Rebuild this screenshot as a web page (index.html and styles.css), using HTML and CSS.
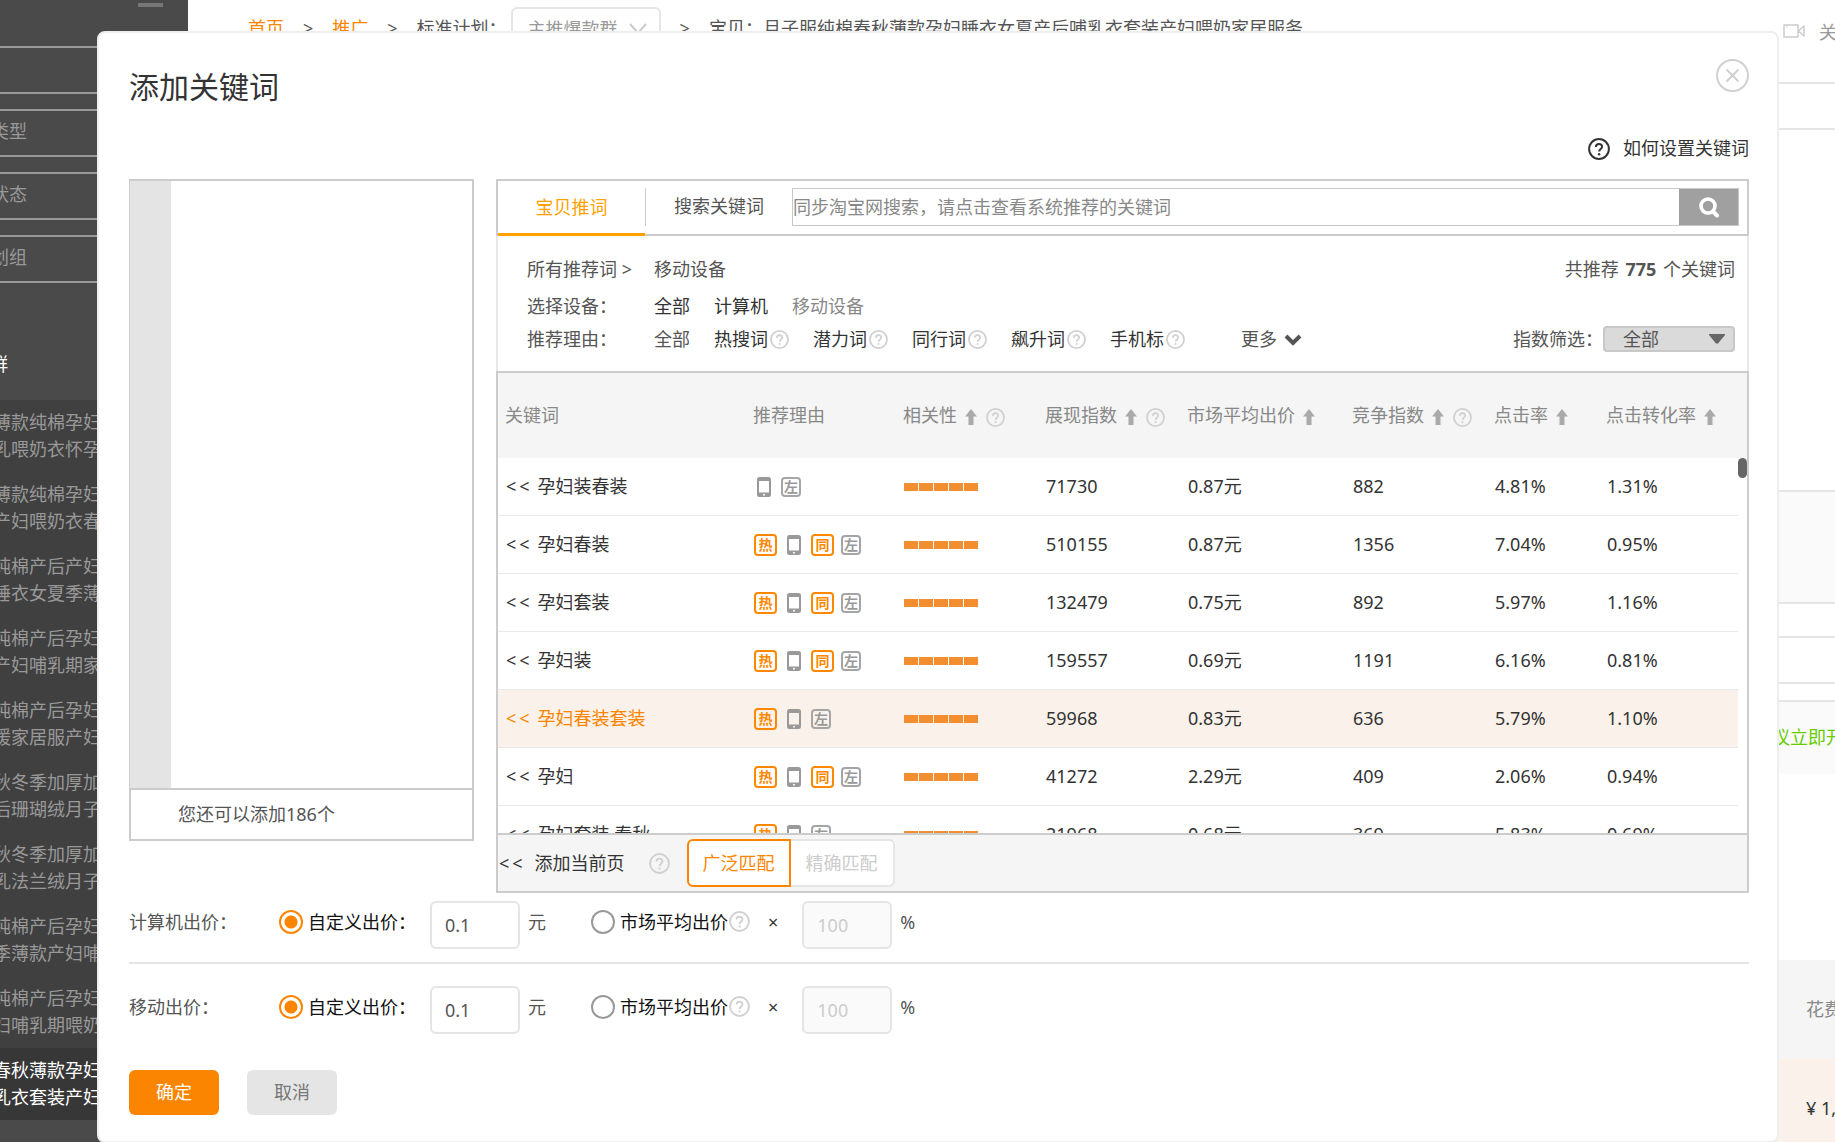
FILE: index.html
```html
<!DOCTYPE html>
<html lang="zh-CN">
<head>
<meta charset="utf-8">
<title>添加关键词</title>
<link rel="stylesheet" href="styles.css">
</head>
<body>
<svg class="sprite" aria-hidden="true">
  <symbol id="help" viewBox="0 0 20 20"><circle cx="10" cy="10" r="9" fill="none" stroke="currentColor" stroke-width="1.800"/><path d="M7.2 8.2c0-3.8 5.6-3.6 5.6-.3 0 2.1-2.6 2.2-2.6 4.4" fill="none" stroke="currentColor" stroke-width="1.800"/><circle cx="10.1" cy="14.8" r="1.1" fill="currentColor"/></symbol>
  <symbol id="up" viewBox="0 0 12 16"><path d="M6 0l6 7.500H8.500V16h-5V7.500H0z" fill="currentColor"/></symbol>
  <symbol id="phone" viewBox="0 0 14 20"><path fill-rule="evenodd" d="M2.500 0h9A2.500 2.500 0 0 1 14 2.500v15a2.500 2.500 0 0 1-2.500 2.500h-9A2.500 2.500 0 0 1 0 17.500v-15A2.500 2.500 0 0 1 2.500 0zM2 4v11.500h10V4zM7 16.700a1 1 0 1 0 0 2 1 1 0 0 0 0-2z" fill="currentColor"/></symbol>
</svg>

<div class="app">
  <aside class="sidebar">
    <div class="collapse"></div>
    <div class="side-box"></div>
    <div class="side-box">类型</div>
    <div class="side-box">状态</div>
    <div class="side-box">划组</div>
    <div class="side-group">群</div>
    <ul class="side-list">
      <li>薄款纯棉孕妇<br>乳喂奶衣怀孕</li>
      <li>薄款纯棉孕妇<br>产妇喂奶衣春</li>
      <li>纯棉产后产妇<br>睡衣女夏季薄</li>
      <li>纯棉产后孕妇<br>产妇哺乳期家</li>
      <li>纯棉产后孕妇<br>暖家居服产妇</li>
      <li>秋冬季加厚加<br>后珊瑚绒月子</li>
      <li>秋冬季加厚加<br>乳法兰绒月子</li>
      <li>纯棉产后孕妇<br>季薄款产妇哺</li>
      <li>纯棉产后孕妇<br>妇哺乳期喂奶</li>
      <li class="current">春秋薄款孕妇<br>乳衣套装产妇</li>
    </ul>
  </aside>
  <main class="page">
    <div class="topbar">
      <nav class="crumbs">
        <a href="#">首页</a><span>&gt;</span><a href="#">推广</a><span>&gt;</span><span>标准计划：</span>
        <button class="plan" type="button">主推爆款群<svg width="18" height="12" viewBox="0 0 18 12"><path d="M1 1l8 9 8-9" fill="none" stroke="#ccc" stroke-width="2"/></svg></button>
        <span>&gt;</span><span class="item-name">宝贝：月子服纯棉春秋薄款孕妇睡衣女夏产后哺乳衣套装产妇喂奶家居服务</span>
      </nav>
      <div class="video"><svg width="22" height="14" viewBox="0 0 22 14"><path d="M1 1h14v12H1zM15.500 7l5.500-5v10z" fill="none" stroke="#ccc" stroke-width="1.500" stroke-linejoin="round"/><path d="M3 3h1.500" stroke="#ccc"/></svg><span>关</span></div>
    </div>
    <div class="strip s1"></div>
    <div class="strip s2"></div>
    <div class="strip s3"></div>
    <div class="strip s4"></div>
    <div class="strip s5"></div>
    <div class="strip s6"></div>
    <div class="strip s7">议立即开</div>
    <div class="strip s8"></div>
    <div class="strip s9">花费</div>
    <div class="strip s10">¥ 1,</div>
  </main>
</div>

<section class="modal" role="dialog" aria-labelledby="dlg-title">
  <header class="modal-head">
    <h1 id="dlg-title">添加关键词</h1>
    <button class="close" type="button" aria-label="关闭"><svg width="33" height="33" viewBox="0 0 33 33" fill="none" stroke="#d0d0d0" stroke-width="2"><circle cx="16.500" cy="16.500" r="15.500"/><path d="M10.500 10.500l12 12m0-12l-12 12"/></svg></button>
  </header>
  <a class="how" href="#"><svg width="22" height="22"><use href="#help"/></svg>如何设置关键词</a>

  <div class="columns">
    <div class="picked">
      <textarea class="editor" aria-label="已选关键词"></textarea>
      <div class="remain">您还可以添加186个</div>
    </div>

    <div class="finder">
      <div class="tabs">
        <button class="tab" type="button">宝贝推词</button>
        <div class="search">
          <label for="kw">搜索关键词</label>
          <input id="kw" type="text" placeholder="同步淘宝网搜索，请点击查看系统推荐的关键词">
          <button type="button" aria-label="搜索"><svg width="22" height="22" viewBox="0 0 22 22" fill="none" stroke="#fff" stroke-linecap="round"><circle cx="10" cy="10" r="7" stroke-width="3.600"/><path d="M15 15.500l4 4" stroke-width="4"/></svg></button>
        </div>
      </div>

      <div class="filters">
        <div class="frow">
          <span class="flabel">所有推荐词 &gt;</span><span>移动设备</span>
          <span class="total">共推荐 <b>775</b> 个关键词</span>
        </div>
        <div class="frow device">
          <span class="flabel">选择设备：</span><a href="#">全部</a><a href="#">计算机</a><span class="off">移动设备</span>
        </div>
        <div class="frow reason">
          <span class="flabel">推荐理由：</span><span>全部</span>
          <a href="#">热搜词<svg class="q"><use href="#help"/></svg></a>
          <a href="#">潜力词<svg class="q"><use href="#help"/></svg></a>
          <a href="#">同行词<svg class="q"><use href="#help"/></svg></a>
          <a href="#">飙升词<svg class="q"><use href="#help"/></svg></a>
          <a href="#">手机标<svg class="q"><use href="#help"/></svg></a>
          <button class="more" type="button">更多<svg width="18" height="12" viewBox="0 0 18 12"><path d="M2 2l7 7 7-7" fill="none" stroke="#555" stroke-width="4"/></svg></button>
          <label class="index-label" for="idx">指数筛选：</label>
          <span class="index"><select id="idx"><option>全部</option></select><svg width="16" height="10" viewBox="0 0 16 10"><path d="M0 0h16v1L9 9.500H7L0 1z" fill="#666"/></svg></span>
        </div>
      </div>

      <div class="results">
        <table>
          <colgroup><col><col class="c-reason"><col class="c-rel"><col class="c-show"><col class="c-price"><col class="c-comp"><col class="c-ctr"><col class="c-cvr"></colgroup>
          <thead>
            <tr>
              <th>关键词</th><th>推荐理由</th>
              <th>相关性<svg class="up"><use href="#up"/></svg><svg class="q"><use href="#help"/></svg></th>
              <th>展现指数<svg class="up"><use href="#up"/></svg><svg class="q"><use href="#help"/></svg></th>
              <th>市场平均出价<svg class="up"><use href="#up"/></svg></th>
              <th>竞争指数<svg class="up"><use href="#up"/></svg><svg class="q"><use href="#help"/></svg></th>
              <th>点击率<svg class="up"><use href="#up"/></svg></th>
              <th>点击转化率<svg class="up"><use href="#up"/></svg></th>
            </tr>
          </thead>
          <tbody>
            <tr><td><a href="#"><i>&lt;</i><i>&lt;</i>孕妇装春装</a></td><td><div class="tags"><svg class="ph"><use href="#phone"/></svg><span class="tag">左</span></div></td><td><div class="bars"><i></i><i></i><i></i><i></i><i></i></div></td><td>71730</td><td>0.87元</td><td>882</td><td>4.81%</td><td>1.31%</td></tr>
            <tr><td><a href="#"><i>&lt;</i><i>&lt;</i>孕妇春装</a></td><td><div class="tags"><span class="tag hot">热</span><svg class="ph"><use href="#phone"/></svg><span class="tag hot">同</span><span class="tag">左</span></div></td><td><div class="bars"><i></i><i></i><i></i><i></i><i></i></div></td><td>510155</td><td>0.87元</td><td>1356</td><td>7.04%</td><td>0.95%</td></tr>
            <tr><td><a href="#"><i>&lt;</i><i>&lt;</i>孕妇套装</a></td><td><div class="tags"><span class="tag hot">热</span><svg class="ph"><use href="#phone"/></svg><span class="tag hot">同</span><span class="tag">左</span></div></td><td><div class="bars"><i></i><i></i><i></i><i></i><i></i></div></td><td>132479</td><td>0.75元</td><td>892</td><td>5.97%</td><td>1.16%</td></tr>
            <tr><td><a href="#"><i>&lt;</i><i>&lt;</i>孕妇装</a></td><td><div class="tags"><span class="tag hot">热</span><svg class="ph"><use href="#phone"/></svg><span class="tag hot">同</span><span class="tag">左</span></div></td><td><div class="bars"><i></i><i></i><i></i><i></i><i></i></div></td><td>159557</td><td>0.69元</td><td>1191</td><td>6.16%</td><td>0.81%</td></tr>
            <tr class="hover"><td><a href="#"><i>&lt;</i><i>&lt;</i>孕妇春装套装</a></td><td><div class="tags"><span class="tag hot">热</span><svg class="ph"><use href="#phone"/></svg><span class="tag">左</span></div></td><td><div class="bars"><i></i><i></i><i></i><i></i><i></i></div></td><td>59968</td><td>0.83元</td><td>636</td><td>5.79%</td><td>1.10%</td></tr>
            <tr><td><a href="#"><i>&lt;</i><i>&lt;</i>孕妇</a></td><td><div class="tags"><span class="tag hot">热</span><svg class="ph"><use href="#phone"/></svg><span class="tag hot">同</span><span class="tag">左</span></div></td><td><div class="bars"><i></i><i></i><i></i><i></i><i></i></div></td><td>41272</td><td>2.29元</td><td>409</td><td>2.06%</td><td>0.94%</td></tr>
            <tr><td><a href="#"><i>&lt;</i><i>&lt;</i>孕妇套装 春秋</a></td><td><div class="tags"><span class="tag hot">热</span><svg class="ph"><use href="#phone"/></svg><span class="tag">左</span></div></td><td><div class="bars"><i></i><i></i><i></i><i></i><i></i></div></td><td>21968</td><td>0.68元</td><td>369</td><td>5.83%</td><td>0.69%</td></tr>
          </tbody>
        </table>
        <div class="scroll"><div class="thumb"></div></div>
      </div>

      <div class="addbar">
        <a href="#"><i>&lt;</i><i>&lt;</i><span>添加当前页</span></a>
        <svg class="q"><use href="#help"/></svg>
        <div class="match"><button class="on" type="button">广泛匹配</button><button type="button" disabled>精确匹配</button></div>
      </div>
    </div>
  </div>

  <form class="bids">
    <div class="bid">
      <span class="bid-name">计算机出价：</span>
      <label><input type="radio" name="pc" checked>自定义出价：</label>
      <input class="num" type="text" value="0.1" aria-label="计算机自定义出价"><span class="unit">元</span>
      <label class="avg"><input type="radio" name="pc">市场平均出价</label><svg class="q"><use href="#help"/></svg>
      <span class="times">×</span><input class="num" type="text" value="100" disabled aria-label="计算机出价百分比"><span class="unit">%</span>
    </div>
    <div class="bid">
      <span class="bid-name">移动出价：</span>
      <label><input type="radio" name="mb" checked>自定义出价：</label>
      <input class="num" type="text" value="0.1" aria-label="移动自定义出价"><span class="unit">元</span>
      <label class="avg"><input type="radio" name="mb">市场平均出价</label><svg class="q"><use href="#help"/></svg>
      <span class="times">×</span><input class="num" type="text" value="100" disabled aria-label="移动出价百分比"><span class="unit">%</span>
    </div>
    <div class="actions"><button class="ok" type="button">确定</button><button type="button">取消</button></div>
  </form>
</section>
</body>
</html>
```
FILE: styles.css
```css
* { box-sizing: border-box; }
html, body { margin: 0; height: 100%; }
body {
  overflow: hidden;
  background: #fff;
  color: #555;
  font: 400 18px/27px "Noto Sans", "Noto Sans CJK SC", sans-serif;
}
button, input, select, textarea { font: inherit; color: inherit; margin: 0; padding: 0; border: 0; background: none; border-radius: 0; outline: 0; }
a { color: #333; text-decoration: none; }
i { font-style: normal; }
svg { display: block; flex: none; }
.sprite { position: absolute; width: 0; height: 0; }
.q { width: 19px; height: 19px; color: #d0d0d0; }

/* page behind the dialog */
.app { display: flex; height: 100vh; }
.sidebar { flex: 0 0 188px; overflow: hidden; background: #4a4a4a; color: #999; }
.collapse { width: 25px; height: 4px; margin: 3px 0 39px 138px; background: #777; }
.side-box { height: 48px; margin: 0 0 15px -9px; border: solid #999; border-width: 2px 0; line-height: 41px; }
.side-group { margin: 68px 0 22px -10px; color: #fff; }
.side-list { margin: 0; padding: 0; list-style: none; background: #404040; }
.side-list li { margin-left: -7px; padding: 9px 0; white-space: nowrap; }
.side-list .current { background: #373737; color: #fff; }

.page { flex: 1; min-width: 0; overflow: hidden; }
.topbar { display: flex; justify-content: space-between; height: 82px; white-space: nowrap; }
.crumbs { display: flex; gap: 19px; padding: 15px 0 0 60px; }
.crumbs a { color: #fc8500; }
.plan { display: flex; align-items: center; justify-content: space-between; width: 150px; height: 44px; margin: -8px 0 0 -15px; padding: 0 12px 0 15px; border: 2px solid #e5e5e5; border-radius: 6px; color: #999; }
.video { display: flex; gap: 14px; width: 52px; padding-top: 19px; color: #999; }
.video svg { margin-top: 5px; }
.strip { padding-left: calc(100% - 29px); border-top: 2px solid #e5e5e5; overflow: hidden; white-space: nowrap; }
.s1 { height: 46px; }
.s2 { height: 362px; }
.s3 { height: 112px; background: #fafafa; }
.s4 { height: 34px; }
.s5 { height: 46px; }
.s6 { height: 18px; }
.s7 { height: 74px; padding-left: calc(100% - 63px); background: #fafafa; color: #66cc00; line-height: 70px; }
.s8 { height: 186px; border: 0; }
.s9 { height: 99px; border: 0; background: #f5f5f5; color: #888; line-height: 98px; }
.s10 { height: 99px; border: 0; background: #faf2ea; color: #333; line-height: 98px; }

/* dialog */
.modal { position: absolute; top: 31px; left: 97px; right: 56px; padding: 26px 28px 26px 30px; border: 2px solid #eee; border-radius: 8px; background: #fff; }
.modal-head { display: flex; justify-content: space-between; align-items: flex-start; }
h1 { margin: 10px 0 0; color: #333; font-size: 30px; font-weight: 400; line-height: 36px; }
.how { display: flex; justify-content: flex-end; align-items: center; gap: 13px; margin: 30px 0 17px; }
.columns { display: grid; grid-template-columns: 345px 1fr; gap: 22px; align-items: start; }

.picked { display: flex; flex-direction: column; }
.editor { height: 609px; border: solid #ccc; border-width: 2px 2px 0 1px; background: linear-gradient(to right, #e4e4e4 41px, #fff 41px); padding-left: 48px; resize: none; }
.remain { height: 53px; padding-left: 47px; border: 2px solid #ccc; line-height: 49px; }

.finder { min-width: 0; }
.tabs { display: flex; height: 57px; border: 2px solid #ccc; }
.tab { width: 147px; height: 55px; border-bottom: 3px solid #ffa200; color: #ffa200; }
.search { display: flex; flex: 1; height: 38px; margin: 7px 8px 0 0; border-left: 1px solid #ccc; }
.search label { padding: 0 28px; line-height: 36px; white-space: nowrap; }
.search input { flex: 1; min-width: 0; border: 1px solid #c8c8c8; border-right: 0; }
.search input::placeholder { color: #888; opacity: 1; }
.search button { display: flex; align-items: center; justify-content: center; width: 60px; border: 1px solid #c8c8c8; border-left: 0; background: #a0a0a0; }

.filters { padding: 20px 12px 18px 29px; border: solid #e8e8e8; border-width: 0 2px; }
.frow { display: flex; gap: 24px; white-space: nowrap; }
.device { margin-top: 10px; }
.reason { margin-top: 6px; }
.flabel { width: 103px; }
.off { color: #888; }
.total { margin-left: auto; }
.total b { margin: 0 2px; font-weight: 700; }
.frow a { display: flex; align-items: center; gap: 2px; }
.more { display: flex; align-items: center; gap: 7px; margin-left: 32px; }
.index-label { margin-left: auto; }
.index { position: relative; width: 132px; height: 26px; margin-left: -24px; }
.index select { display: block; width: 132px; height: 26px; padding-left: 18px; border: 2px solid #c8c8c8; border-radius: 4px; background: #dadada; line-height: 22px; appearance: none; }
.index svg { position: absolute; top: 8px; right: 10px; pointer-events: none; }

.results { display: flex; height: 462px; border: solid #ccc; border-width: 2px 2px 0; overflow: hidden; }
table { flex: 1; height: max-content; border-collapse: separate; border-spacing: 0; table-layout: fixed; }
.c-reason { width: 150px; }
.c-rel, .c-show, .c-comp { width: 142px; }
.c-price { width: 165px; }
.c-ctr { width: 112px; }
.c-cvr { width: 139px; }
th { height: 85px; padding: 0 0 0 7px; background: #f5f5f5; color: #888; font-weight: 400; text-align: left; white-space: nowrap; }
th svg { display: inline-block; vertical-align: middle; }
.up { width: 12px; height: 16px; margin-left: 8px; color: #aaa; }
th .q { margin-left: 9px; }
td { height: 58px; padding: 0 0 0 8px; border-bottom: 1px solid #e8e8e8; color: #333; white-space: nowrap; }
td a i, .addbar i { margin-right: 3px; }
td a i + i { margin-right: 8px; }
.hover td { background: #faf2ea; }
.hover a { color: #fc8500; }
.tags { display: flex; align-items: center; gap: 7px; }
.ph { width: 14px; height: 20px; margin: 0 3px; color: #999; }
.tag { width: 20px; height: 20px; border: 2px solid #a5a5a5; border-radius: 4px; color: #999; font-size: 14px; font-weight: 700; line-height: 16px; text-align: center; }
.tag.hot { width: 23px; height: 22px; border-color: #ff8800; color: #ff8800; line-height: 18px; }
.bars { display: flex; gap: 1px; }
.bars i { width: 14px; height: 8px; background: #f28e30; }
.scroll { width: 9px; border-top: 85px solid #f5f5f5; }
.thumb { height: 20px; border-radius: 5px; background: #666; }

.addbar { display: flex; align-items: center; height: 60px; padding-left: 1px; border: 2px solid #ccc; background: #f5f5f5; }
.addbar span { margin-left: 9px; }
.addbar .q { width: 21px; height: 21px; margin: 0 17px 0 24px; }
.match { display: flex; }
.match button { width: 104px; height: 48px; border: 2px solid #e5e5e5; border-left: 0; border-radius: 0 6px 6px 0; background: #fff; color: #ccc; }
.match .on { border: 2px solid #fc8500; border-radius: 6px 0 0 6px; color: #fc8500; }

.bid { display: flex; padding: 8px 0 13px; border-bottom: 2px solid #e5e5e5; line-height: 42px; }
.bid + .bid { padding: 22px 0 0; border: 0; }
.bid-name { width: 150px; }
.bid label { display: flex; align-items: center; gap: 5px; height: 42px; color: #111; }
.bid input[type="radio"] { width: 24px; height: 24px; border: 2px solid #999; border-radius: 50%; appearance: none; }
.bid input[type="radio"]:checked { border-color: #fc8500; background: radial-gradient(circle, #fc8500 6px, #fff 7px); }
.num { width: 90px; height: 48px; margin-left: 14px; padding-left: 13px; border: 2px solid #e5e5e5; border-radius: 6px; }
.num:disabled { margin-left: 24px; background: #fafafa; color: #ccc; }
.unit { width: 18px; margin-left: 8px; }
.bid .avg { margin-left: 45px; }
.bid .q { width: 21px; height: 21px; margin: 10px 18px 0 1px; }
.times { color: #333; }

.actions { display: flex; gap: 28px; margin-top: 36px; }
.actions button { width: 90px; height: 45px; border-radius: 6px; background: #e5e5e5; color: #777; }
.actions .ok { background: #fc8500; color: #fff; }
```
